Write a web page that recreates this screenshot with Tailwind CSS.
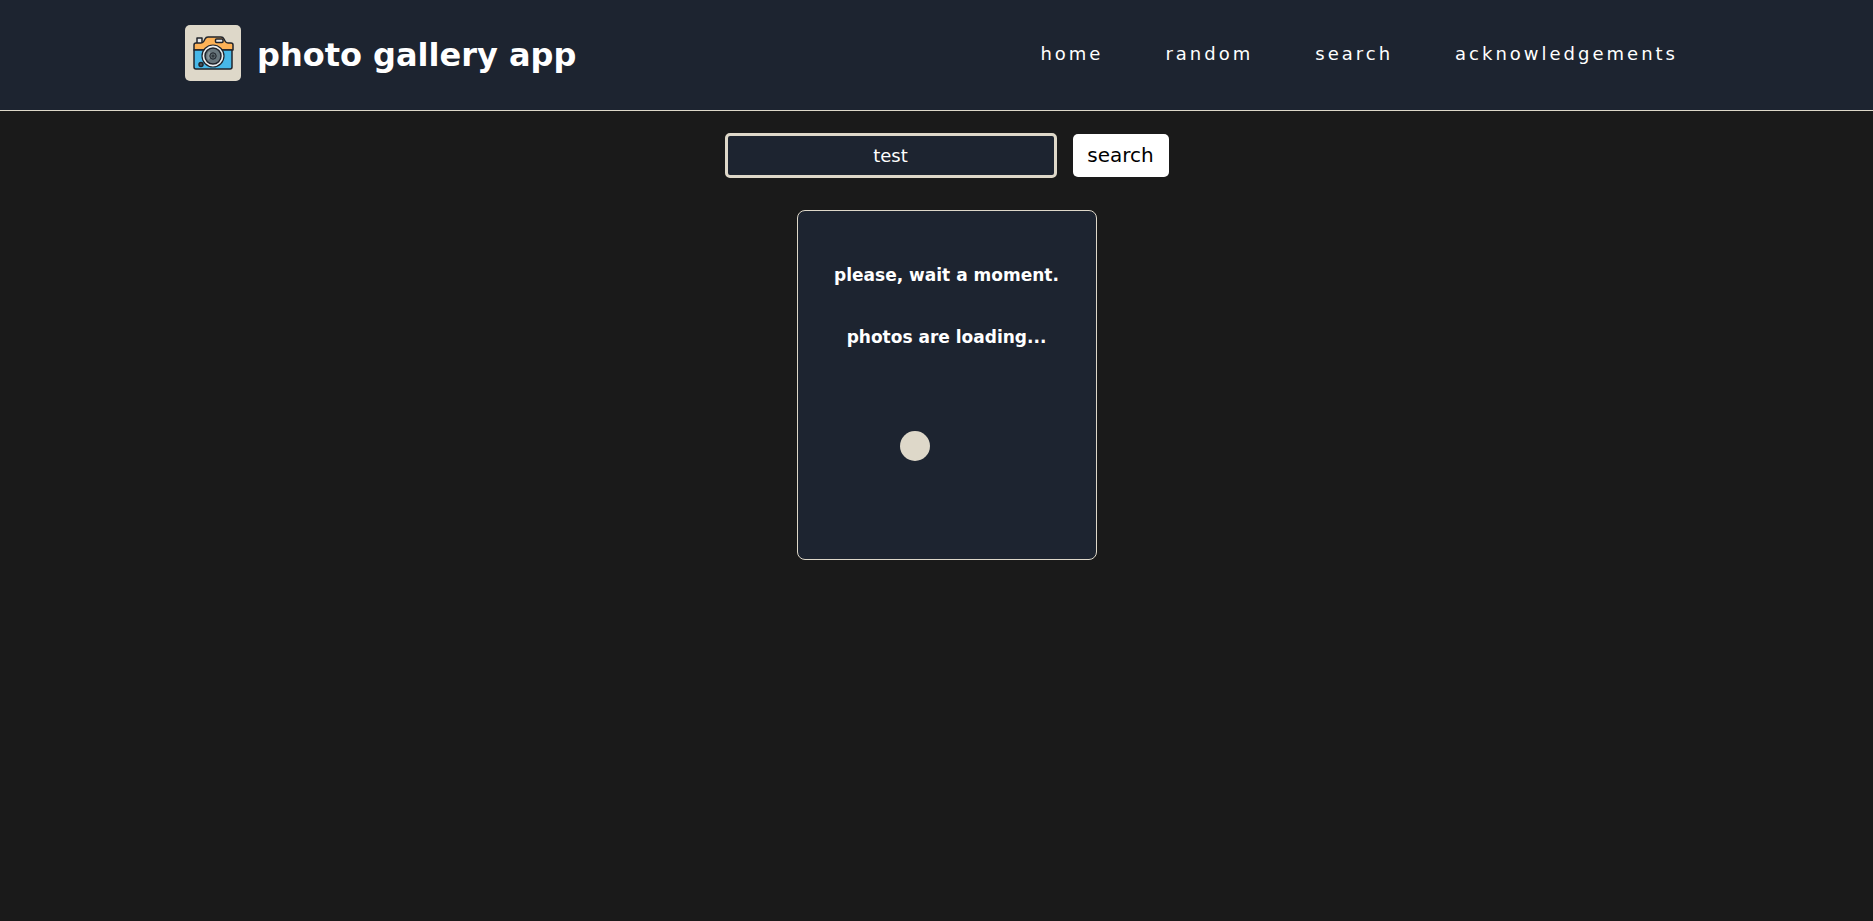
<!DOCTYPE html>
<html lang="en">
<head>
<meta charset="utf-8">
<meta name="viewport" content="width=device-width, initial-scale=1">
<title>photo gallery app</title>
<script src="https://cdn.jsdelivr.net/npm/@tailwindcss/browser@4"></script>
</head>
<body class="min-h-screen bg-[#1a1a1a] text-white font-['DejaVu_Sans',sans-serif]">
<header class="border-b border-[#ded8c9] bg-[#1d2430]">
  <div class="mx-auto flex max-w-[1503px] items-start justify-between pt-[25px] pb-[29px]">
    <div class="flex items-center gap-4">
      <svg class="size-14 rounded-[5px] bg-[#ded8c9]" viewBox="0 0 56 56" aria-hidden="true">
        <g stroke="#20242b" stroke-width="1.5" stroke-linejoin="round">
          <path d="M12 18V13h5v5" fill="#e8eaec"/>
          <path d="M9 25V20q0-2 2-2h5q2 0 3-2l1-2q1-2 3-2h13q2 0 3 2l1 2q1 2 3 2h3q2 0 2 2v5z" fill="#fdb257"/>
          <path d="M9 25h38v17q0 2-2 2H11q-2 0-2-2z" fill="#47b8e8"/>
          <rect x="30.500" y="14" width="7.500" height="3.500" rx="1" fill="#e8eaec"/>
          <circle cx="16" cy="39.500" r="2" fill="#4b5459"/>
          <circle cx="28" cy="31" r="11" fill="#edf0f1" stroke-width="1.200"/>
          <circle cx="28" cy="31" r="8" fill="#68757b"/>
          <path d="M24 26q-3 4-1 9l5-4z" fill="#8b979b" stroke="none"/>
          <circle cx="28" cy="31" r="3.200" fill="#5b676d" stroke-width="1"/>
          <circle cx="28" cy="31" r="1.500" fill="#333a3f" stroke="none"/>
        </g>
      </svg>
      <h1 class="pt-1 text-[32px] leading-10 font-bold">photo gallery app</h1>
    </div>
    <nav class="flex gap-[62px] pt-[17px] pr-[10px] text-lg leading-6 tracking-[3px]">
      <a href="#home">home</a>
      <a href="#random">random</a>
      <a href="#search">search</a>
      <a href="#acknowledgements">acknowledgements</a>
    </nav>
  </div>
</header>
<main class="flex flex-col items-center gap-8 pt-[22px] pl-5">
  <form class="flex items-center gap-4">
    <input type="text" value="test" aria-label="Search photos" class="h-[45px] w-[332px] rounded-[5px] border-3 border-[#ded8c9] bg-[#1d2430] text-center text-lg text-white outline-none">
    <button type="button" class="h-[43px] w-24 rounded-[5px] bg-white pb-0.5 text-xl text-black">search</button>
  </form>
  <section class="flex h-[350px] w-[300px] flex-col rounded-lg border border-[#ded8c9] bg-[#1d2430] pt-[50px] text-center text-[17px] font-bold" role="status">
    <p class="leading-7">please, wait a moment.</p>
    <p class="mt-[34px] leading-7">photos are loading...</p>
    <div class="mt-20 ml-[102px] size-[30px] rounded-full bg-[#ded8c9]"></div>
  </section>
</main>
</body>
</html>
